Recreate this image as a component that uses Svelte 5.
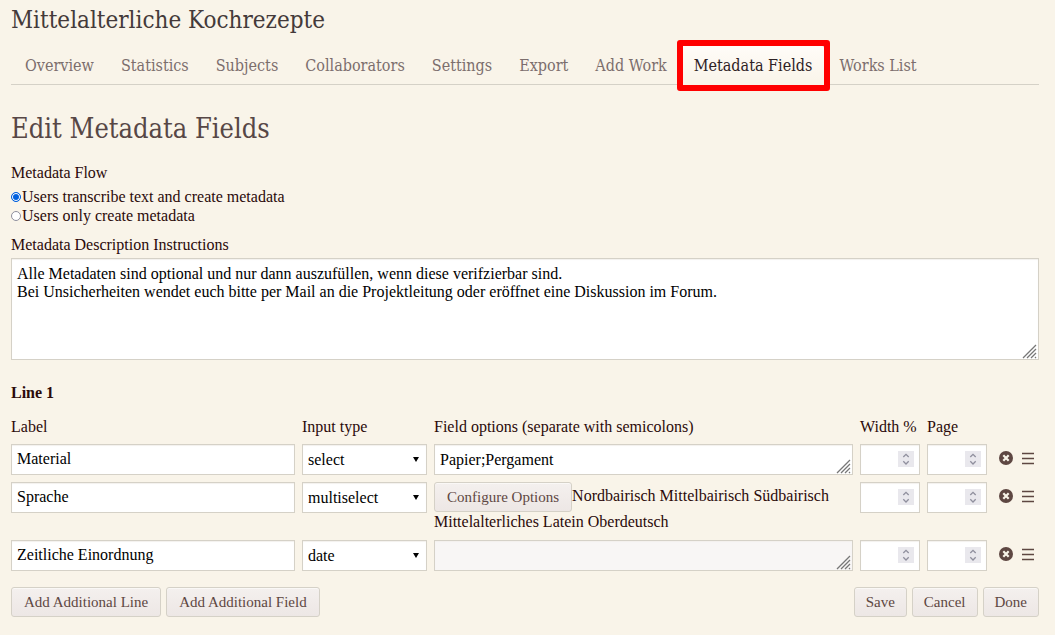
<script>
  const tabs = ['Overview', 'Statistics', 'Subjects', 'Collaborators', 'Settings', 'Export', 'Add Work', 'Metadata Fields', 'Works List'];
  const active = 'Metadata Fields';
  const types = ['text', 'textarea', 'select', 'multiselect', 'date', 'instruction'];
  const instructions =
    'Alle Metadaten sind optional und nur dann auszufüllen, wenn diese verifzierbar sind.\nBei Unsicherheiten wendet euch bitte per Mail an die Projektleitung oder eröffnet eine Diskussion im Forum.';

  let flow = $state('transcribe');
  let fields = $state([
    { label: 'Material', type: 'select', options: 'Papier;Pergament' },
    { label: 'Sprache', type: 'multiselect', options: 'Nordbairisch;Mittelbairisch;Südbairisch;Mittelalterliches Latein;Oberdeutsch' },
    { label: 'Zeitliche Einordnung', type: 'date', options: '' }
  ]);
</script>

{#snippet grip()}
  <svg class="grip" viewBox="0 0 15 15" aria-hidden="true">
    <path d="M1 14 14 1M5 14l9-9M9 14l5-5M13 14l1-1" />
  </svg>
{/snippet}

{#snippet number(name)}
  <div class="number">
    <input type="number" aria-label={name} />
    <svg viewBox="0 0 16 16" aria-hidden="true">
      <path d="M5.300 6 8 3.300 10.700 6M5.300 10.300 8 13l2.700-2.700" />
    </svg>
  </div>
{/snippet}

<main>
  <h1>Mittelalterliche Kochrezepte</h1>
  <nav>
    {#each tabs as tab}
      <a href="#top" class:active={tab === active}>{tab}</a>
    {/each}
  </nav>

  <h2>Edit Metadata Fields</h2>

  <form onsubmit={(e) => e.preventDefault()}>
    <fieldset>
      <legend>Metadata Flow</legend>
      <label><input type="radio" name="flow" value="transcribe" bind:group={flow} />Users transcribe text and create metadata</label>
      <label><input type="radio" name="flow" value="describe" bind:group={flow} />Users only create metadata</label>
    </fieldset>

    <label class="caption" for="instructions">Metadata Description Instructions</label>
    <div class="area large">
      <textarea id="instructions" value={instructions}></textarea>
      {@render grip()}
    </div>

    <h3>Line 1</h3>
    <div class="row head">
      <span>Label</span>
      <span>Input type</span>
      <span>Field options (separate with semicolons)</span>
      <span>Width %</span>
      <span>Page</span>
    </div>

    {#each fields as field}
      <div class="row">
        <input class="text" type="text" aria-label="Label" bind:value={field.label} />
        <div class="select">
          <select aria-label="Input type" bind:value={field.type}>
            {#each types as type}<option>{type}</option>{/each}
          </select>
          <svg viewBox="0 0 6 5" aria-hidden="true"><path d="M0 0h6L3 5z" /></svg>
        </div>
        {#if field.type === 'multiselect'}
          <div class="configured"><button type="button">Configure Options</button>{#each field.options.split(';') as option}<span>{option}</span>{' '}{/each}</div>
        {:else}
          <div class="area">
            <textarea aria-label="Field options" rows="1" disabled={field.type === 'date'} bind:value={field.options}></textarea>
            {@render grip()}
          </div>
        {/if}
        {@render number('Width %')}
        {@render number('Page')}
        <div class="tools">
          <button type="button" class="icon" aria-label="Delete field">
            <svg viewBox="0 0 14 14" aria-hidden="true">
              <circle cx="7" cy="7" r="7" />
              <path class="cross" d="m4.300 4.300 5.400 5.400M9.700 4.300 4.300 9.700" />
            </svg>
          </button>
          <button type="button" class="icon" aria-label="Move field">
            <svg viewBox="0 0 14 14" aria-hidden="true">
              <path class="bars" d="M1 2.500h12M1 7.500h12M1 12.500h12" />
            </svg>
          </button>
        </div>
      </div>
    {/each}

    <footer>
      <button type="button" class="wide">Add Additional Line</button>
      <button type="button" class="wide">Add Additional Field</button>
      <span class="spacer"></span>
      <button type="submit">Save</button>
      <button type="button">Cancel</button>
      <button type="button">Done</button>
    </footer>
  </form>
</main>

<style>
  :global(body) {
    background: #f9f4e9;
  }
  main {
    padding: 4px 16px 16px 11px;
    color: #2b0a0a;
    font: 16px/20px 'Liberation Serif', serif;
  }
  h1, h2, nav {
    font-family: 'DejaVu Serif Condensed', 'DejaVu Serif', serif;
    font-stretch: condensed;
  }
  h1, h2, h3 {
    margin: 0;
  }
  h1 {
    color: #443a3a;
    font-size: 24px;
    font-weight: 400;
    line-height: 32px;
  }
  nav {
    display: flex;
    margin-top: 9px;
    border-bottom: 1px solid #d5d1c7;
    font-size: 16px;
    line-height: 20px;
  }
  nav a {
    position: relative;
    padding: 10px 12px 8px 13px;
    border: 1px solid transparent;
    border-bottom: 0;
    color: #7c6e6d;
    text-decoration: none;
    white-space: nowrap;
  }
  nav a.active {
    margin-bottom: -1px;
    border-color: #d5d1c7;
    border-radius: 3px 3px 0 0;
    background: linear-gradient(#fffcf8, #f9f4e9);
    color: #2e2225;
  }
  nav a.active::after {
    content: '';
    position: absolute;
    z-index: 1;
    inset: -6px -6px -6px -4px;
    border: 6px solid #f00;
    border-radius: 3px;
  }
  h2 {
    margin-top: 26px;
    color: #574746;
    font-size: 27px;
    font-weight: 400;
    line-height: 36px;
  }
  fieldset {
    display: flex;
    flex-direction: column;
    margin: 16px 0 0;
    padding: 0;
    border: 0;
  }
  legend {
    margin-bottom: 4px;
    padding: 0;
  }
  fieldset label {
    display: flex;
    align-items: center;
    line-height: 19px;
  }
  input[type='radio'] {
    appearance: none;
    box-sizing: border-box;
    width: 10px;
    height: 10px;
    margin: 0 1px 0 0;
    border: 1px solid #8f8f9d;
    border-radius: 50%;
    background: #fff;
  }
  input[type='radio']:checked {
    border-color: #0060df;
    background: #0060df;
    box-shadow: inset 0 0 0 1px #fff;
  }
  .caption {
    display: block;
    margin-top: 10px;
  }
  .text, textarea, select, .number input {
    box-sizing: border-box;
    display: block;
    width: 100%;
    height: 31px;
    margin: 0;
    padding: 0 5px 2px;
    border: 1px solid #d5d1c7;
    border-radius: 0;
    background: #fff;
    color: #000;
    font: inherit;
    line-height: 18px;
    box-shadow: inset 0 1px 1px #f3f1ee;
  }
  textarea {
    padding: 6px 5px 5px;
    resize: none;
    overflow: hidden;
  }
  textarea:disabled {
    background: #f8f6f5;
  }
  .area, .select, .number {
    position: relative;
  }
  .area.large {
    margin-top: 3px;
  }
  .large textarea {
    height: 102px;
  }
  .grip {
    position: absolute;
    right: 2px;
    bottom: 1px;
    width: 15px;
    height: 15px;
    fill: none;
    stroke: #777;
    stroke-width: 1.300;
  }
  h3 {
    margin-top: 23px;
    font-size: 16px;
    line-height: 20px;
  }
  .row {
    display: grid;
    grid-template-columns: minmax(0, 284fr) 125px minmax(0, 419fr) 60px 60px 45px;
    gap: 7px;
    align-items: start;
    margin-top: 7px;
  }
  .head {
    margin: 14px 0 7px;
    white-space: nowrap;
  }
  select {
    appearance: none;
    padding-bottom: 0;
  }
  .select svg {
    position: absolute;
    top: 13px;
    right: 8px;
    width: 6px;
    height: 5px;
    pointer-events: none;
  }
  .number input {
    appearance: textfield;
  }
  .number svg {
    position: absolute;
    top: 7px;
    right: 6px;
    width: 16px;
    height: 16px;
    background: #e9e8ed;
    fill: none;
    stroke: #8f8f9d;
    stroke-width: 1.300;
    pointer-events: none;
  }
  .configured {
    margin-bottom: -1px;
    padding-top: 1px;
    line-height: 25px;
  }
  button {
    box-sizing: border-box;
    height: 30px;
    padding: 0 11px;
    border: 1px solid #d5d1c7;
    border-radius: 3px;
    background: linear-gradient(#f4f0ee, #ede7e5);
    color: #5e4742;
    font: inherit;
    font-size: 15px;
    white-space: nowrap;
    box-shadow: inset 0 1px 0 #faf8f6;
  }
  .configured button, .wide {
    padding: 0 12px;
  }
  .configured button {
    margin: -3px 0;
    vertical-align: middle;
  }
  .tools {
    display: flex;
    gap: 8px;
    padding: 7px 0 0 5px;
  }
  .icon {
    width: 14px;
    height: 14px;
    padding: 0;
    border: 0;
    background: none;
    box-shadow: none;
  }
  .icon svg {
    display: block;
    width: 14px;
    height: 14px;
    fill: #5e4742;
  }
  .icon .cross {
    stroke: #f9f4e9;
    stroke-width: 2.200;
  }
  .icon .bars {
    stroke: #5e4742;
    stroke-width: 1.500;
  }
  footer {
    display: flex;
    gap: 5px;
    margin-top: 16px;
  }
  .spacer {
    flex: 1;
  }
</style>
